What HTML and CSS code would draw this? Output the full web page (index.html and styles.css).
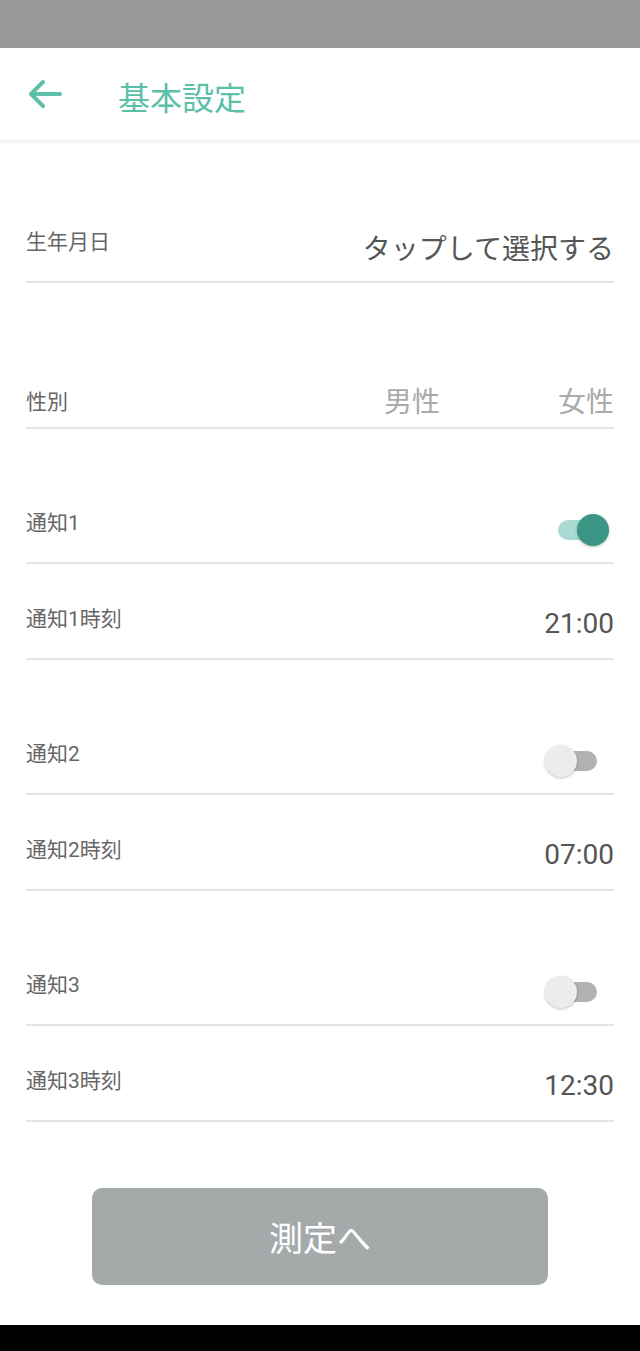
FILE: index.html
```html
<!DOCTYPE html>
<html lang="ja">
<head>
    <meta charset="UTF-8">
    <meta name="viewport" content="width=device-width, initial-scale=1.0">
    <title>基本設定</title>
    <link rel="stylesheet" href="styles.css">
</head>
<body>

    <div class="status-bar"></div>

    <!-- Header -->
    <div class="app-bar">
        <div class="back">
            <svg width="36" height="32" viewBox="0 0 36 32">
                <path d="M33 16 H4 M16 4 L4 16 L16 28" fill="none" stroke="#5cc0a8" stroke-width="4" stroke-linecap="round" stroke-linejoin="round"/>
            </svg>
        </div>
        <div class="title">基本設定</div>
    </div>

    <div class="content">
        <div class="row row-birth">
            <div class="label">生年月日</div>
            <div class="value">タップして選択する</div>
        </div>

        <div class="row row-gender">
            <div class="label">性別</div>
            <div class="gender">
                <span>男性</span>
                <span>女性</span>
            </div>
        </div>

        <div class="row row-gap">
            <div class="label">通知1</div>
            <div class="switch on"><div class="track"></div><div class="thumb"></div></div>
        </div>
        <div class="row row-time">
            <div class="label">通知1時刻</div>
            <div class="value">21:00</div>
        </div>

        <div class="row row-gap">
            <div class="label">通知2</div>
            <div class="switch"><div class="track"></div><div class="thumb"></div></div>
        </div>
        <div class="row row-time">
            <div class="label">通知2時刻</div>
            <div class="value">07:00</div>
        </div>

        <div class="row row-gap">
            <div class="label">通知3</div>
            <div class="switch"><div class="track"></div><div class="thumb"></div></div>
        </div>
        <div class="row row-time">
            <div class="label">通知3時刻</div>
            <div class="value">12:30</div>
        </div>

        <button class="go">測定へ</button>
    </div>

    <div class="nav-bar"></div>

</body>
</html>
```

FILE: styles.css
```css
/* Base */
body {
    margin: 0;
    height: 100vh;
    display: flex;
    flex-direction: column;
    font-family: Roboto, "Noto Sans CJK JP", sans-serif;
    background-color: #ffffff;
    color: #555555;
}

.status-bar {
    height: 48px;
    background-color: #9a9a9a;
}

/* Header */
.app-bar {
    height: 92px;
    display: flex;
    align-items: center;
    background-color: #ffffff;
    box-shadow: 0 2px 4px rgba(0, 0, 0, 0.08);
    position: relative;
}

.back {
    width: 36px;
    height: 32px;
    margin-left: 27px;
    margin-right: 55px;
}

.back svg {
    display: block;
}

.title {
    font-size: 32px;
    color: #5cc0a8;
    margin-top: 3px;
}

/* Settings list */
.content {
    flex: 1;
    padding: 0 26px;
    display: flex;
    flex-direction: column;
}

.row {
    height: 72px;
    display: flex;
    align-items: center;
    justify-content: space-between;
    border-bottom: 2px solid #e4e4e4;
}

.row-birth {
    margin-top: 69px;
}

.row-gender {
    height: 54px;
    margin-top: 90px;
}

.row-gap {
    margin-top: 61px;
}

.row-time {
    margin-top: 22px;
}

.label {
    font-size: 21px;
    color: #666666;
    margin-bottom: 10px;
}

.row-gender .label {
    margin-bottom: 0;
}

.value {
    font-size: 28px;
    color: #555555;
    margin-top: 3px;
}

.gender {
    display: flex;
    gap: 118px;
    font-size: 28px;
    color: #aaaaaa;
}

/* Switches */
.switch {
    width: 52px;
    height: 32px;
    position: relative;
    margin-right: 17px;
    margin-top: 8px;
}

.switch .track {
    position: absolute;
    left: 16px;
    right: 0;
    top: 6px;
    height: 20px;
    border-radius: 10px;
    background-color: #b2b2b2;
}

.switch .thumb {
    position: absolute;
    left: 0;
    top: 0;
    width: 32px;
    height: 32px;
    border-radius: 50%;
    background-color: #ececec;
    box-shadow: 0 1px 3px rgba(0, 0, 0, 0.25);
}

.switch.on {
    margin-right: 5px;
}

.switch.on .track {
    left: 1px;
    right: 14px;
    background-color: #a9dbd2;
}

.switch.on .thumb {
    left: auto;
    right: 0;
    background-color: #3a9584;
}

/* Bottom button */
.go {
    align-self: center;
    width: 456px;
    height: 97px;
    margin-top: 66px;
    border: none;
    border-radius: 10px;
    background-color: #a4aaa9;
    color: #ffffff;
    font-family: Roboto, "Noto Sans CJK JP", sans-serif;
    font-size: 34px;
}

.nav-bar {
    height: 26px;
    background-color: #000000;
}
```
